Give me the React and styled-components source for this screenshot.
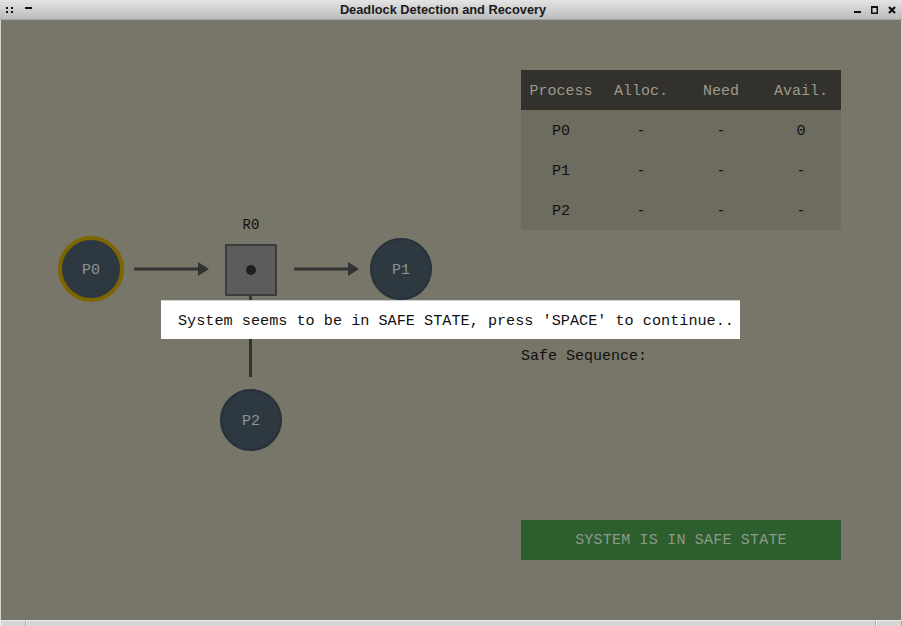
import React from "react";
import styled, { createGlobalStyle } from "styled-components";

const Global = createGlobalStyle`
  html, body { margin: 0; padding: 0; background: #d8d8d8; }
  body { font-family: "Liberation Mono", "DejaVu Sans Mono", monospace; }
`;

const Window = styled.div`
  width: 902px;
  height: 626px;
  display: flex;
  flex-direction: column;
  background: #d4d4d4;
  overflow: hidden;
`;

const TitleBar = styled.div`
  height: 20px;
  flex: 0 0 20px;
  display: flex;
  align-items: center;
  padding: 0 6px;
  background: linear-gradient(#e4e4e4, #bcbcbc);
  border-bottom: 1px solid #a8a8a8;
  box-sizing: border-box;
`;

const TitleLeft = styled.div`
  display: flex;
  align-items: center;
  gap: 11px;
  width: 60px;
`;

const TitleRight = styled.div`
  display: flex;
  align-items: center;
  justify-content: flex-end;
  gap: 10px;
  width: 76px;
`;

const Title = styled.div`
  flex: 1;
  text-align: center;
  font-family: "Liberation Sans", Arial, sans-serif;
  font-weight: bold;
  font-size: 12.8px;
  color: #1a1a1a;
`;

const Canvas = styled.div`
  position: relative;
  flex: 0 0 600px;
  margin: 0 1px;
  background: #787668;
`;

const BottomFrame = styled.div`
  flex: 1;
  display: flex;
  background: #d6d6d6;
  border-top: 1px solid #eaeaea;
`;

const FrameSeg = styled.div`
  width: ${(p) => p.$w || "auto"};
  flex: ${(p) => (p.$w ? "0 0 auto" : "1")};
  border-right: 1px solid #a9a9a9;
  border-left: 1px solid #f0f0f0;
`;

const Diagram = styled.div`
  position: absolute;
  inset: 0;
`;

const Edges = styled.svg`
  position: absolute;
  left: 0;
  top: 0;
`;

const ProcessNode = styled.div`
  position: absolute;
  width: ${(p) => p.$r * 2}px;
  height: ${(p) => p.$r * 2}px;
  margin-left: ${(p) => -p.$r}px;
  margin-top: ${(p) => -p.$r}px;
  border-radius: 50%;
  box-sizing: border-box;
  background: #2d3840;
  border: ${(p) => (p.$active ? "4px solid #7f6500" : "2px solid #26313a")};
  display: flex;
  align-items: center;
  justify-content: center;
  padding-top: 2px;
  color: #8b9298;
  font-size: 15px;
`;

const ResourceNode = styled.div`
  position: absolute;
  width: 52px;
  height: 52px;
  box-sizing: border-box;
  background: #5c5c5c;
  border: 2px solid #3c3c3c;
  display: flex;
  align-items: center;
  justify-content: center;
`;

const Dot = styled.div`
  width: 10px;
  height: 10px;
  border-radius: 50%;
  background: #1e1e1e;
`;

const ResourceLabel = styled.div`
  position: absolute;
  width: 52px;
  text-align: center;
  font-size: 14px;
  color: #111;
`;

const RightPanel = styled.div`
  margin-left: 520px;
  padding-top: 50px;
  width: 320px;
  display: flex;
  flex-direction: column;
`;

const Table = styled.div`
  display: grid;
  grid-template-columns: repeat(4, 80px);
  background: #6e6b5f;
`;

const HeadCell = styled.div`
  height: 40px;
  box-sizing: border-box;
  padding-top: 2px;
  background: #32312b;
  color: #9c9a8e;
  display: flex;
  align-items: center;
  justify-content: center;
  font-size: 15px;
`;

const Cell = styled.div`
  height: 40px;
  box-sizing: border-box;
  padding-top: 2px;
  color: #111;
  display: flex;
  align-items: center;
  justify-content: center;
  font-size: 15px;
`;

const SafeSeq = styled.div`
  margin-top: 117px;
  height: 20px;
  line-height: 20px;
  font-size: 15px;
  color: #111;
`;

const StateBox = styled.div`
  margin-top: 153px;
  height: 40px;
  box-sizing: border-box;
  padding-top: 1px;
  background: #2d5e2d;
  color: #8c9a88;
  display: flex;
  align-items: center;
  justify-content: center;
  font-size: 15px;
  letter-spacing: 0.2px;
`;

const Popup = styled.div`
  position: absolute;
  left: 160px;
  top: 280px;
  width: 579px;
  height: 39px;
  box-sizing: border-box;
  background: #ffffff;
  border-top: 1px solid #d0d0d0;
  display: flex;
  align-items: center;
  padding-left: 17px;
  padding-top: 2px;
  font-size: 15.2px;
  color: #111;
  white-space: pre;
`;

function Arrow({ x1, x2, y }) {
  return (
    <g>
      <line x1={x1} y1={y} x2={x2 - 10} y2={y} stroke="#333333" strokeWidth="3" />
      <polygon points={`${x2 - 11},${y - 7} ${x2},${y} ${x2 - 11},${y + 7}`} fill="#333333" />
    </g>
  );
}

const headers = ["Process", "Alloc.", "Need", "Avail."];
const rows = [
  ["P0", "-", "-", "0"],
  ["P1", "-", "-", "-"],
  ["P2", "-", "-", "-"],
];

export default function App() {
  return (
    <>
      <Global />
      <Window>
        <TitleBar>
          <TitleLeft>
            <svg width="8" height="8" viewBox="0 0 8 8">
              <rect x="0" y="1" width="2" height="2" fill="#111" />
              <rect x="5" y="1" width="2" height="2" fill="#111" />
              <rect x="0" y="5" width="2" height="2" fill="#111" />
              <rect x="5" y="5" width="2" height="2" fill="#111" />
            </svg>
            <svg width="7" height="8" viewBox="0 0 7 8">
              <rect x="0" y="1" width="7" height="2" fill="#111" />
            </svg>
          </TitleLeft>
          <Title>Deadlock Detection and Recovery</Title>
          <TitleRight>
            <svg width="7" height="8" viewBox="0 0 7 8">
              <rect x="0" y="5" width="7" height="2" fill="#111" />
            </svg>
            <svg width="7" height="8" viewBox="0 0 7 8">
              <rect x="0.75" y="0.75" width="5.5" height="6.5" fill="none" stroke="#111" strokeWidth="1.5" />
              <rect x="0" y="0" width="7" height="2" fill="#111" />
            </svg>
            <svg width="8" height="8" viewBox="0 0 8 8">
              <path d="M1 1 L7 7 M7 1 L1 7" stroke="#111" strokeWidth="2.2" />
            </svg>
          </TitleRight>
        </TitleBar>
        <Canvas>
          <Diagram>
            <Edges width="900" height="600">
              <Arrow x1={133} x2={208} y={249} />
              <Arrow x1={293} x2={358} y={249} />
              <line x1="249.5" y1="276" x2="249.5" y2="357" stroke="#333333" strokeWidth="3" />
            </Edges>
            <ProcessNode $r={33} $active style={{ left: 90, top: 249 }}>P0</ProcessNode>
            <ProcessNode $r={31} style={{ left: 400, top: 249 }}>P1</ProcessNode>
            <ProcessNode $r={31} style={{ left: 250, top: 400 }}>P2</ProcessNode>
            <ResourceLabel style={{ left: 224, top: 197 }}>R0</ResourceLabel>
            <ResourceNode style={{ left: 224, top: 224 }}>
              <Dot />
            </ResourceNode>
          </Diagram>
          <RightPanel>
            <Table>
              {headers.map((h) => (
                <HeadCell key={h}>{h}</HeadCell>
              ))}
              {rows.map((r, i) =>
                r.map((c, j) => <Cell key={`${i}-${j}`}>{c}</Cell>)
              )}
            </Table>
            <SafeSeq>Safe Sequence:</SafeSeq>
            <StateBox>SYSTEM IS IN SAFE STATE</StateBox>
          </RightPanel>
          <Popup>System seems to be in SAFE STATE, press 'SPACE' to continue..</Popup>
        </Canvas>
        <BottomFrame>
          <FrameSeg $w="24px" />
          <FrameSeg />
          <FrameSeg $w="24px" />
        </BottomFrame>
      </Window>
    </>
  );
}
